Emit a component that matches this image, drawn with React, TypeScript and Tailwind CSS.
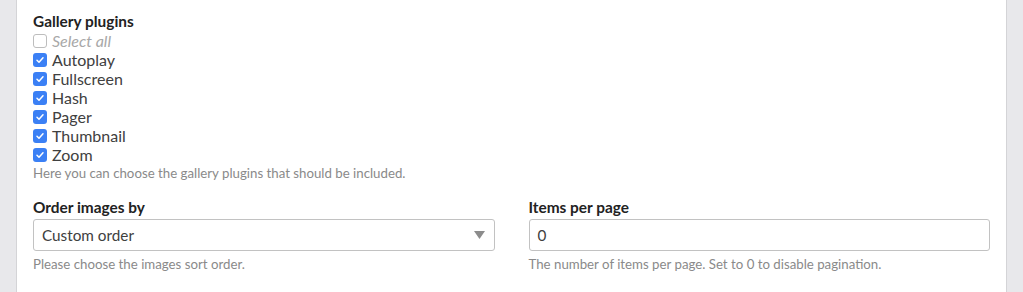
const plugins = ["Autoplay", "Fullscreen", "Hash", "Pager", "Thumbnail", "Zoom"];

const Box = ({ checked }: { checked: boolean }) =>
  checked ? (
    <span className="flex h-[14px] w-[14px] items-center justify-center rounded-[3px] bg-[#3b80f5]">
      <svg width="10" height="10" viewBox="0 0 10 10" fill="none">
        <path d="M2 5.2l2 2 4-4.4" stroke="#fff" strokeWidth="1.5" strokeLinecap="round" strokeLinejoin="round" />
      </svg>
    </span>
  ) : (
    <span className="h-[14px] w-[14px] rounded-[3px] border border-[#bdbdbd] bg-white" />
  );

const Label = ({ children, className = "" }: { children: string; className?: string }) => (
  <div className={`text-[15.4px] font-bold leading-[19px] text-[#222] ${className}`}>{children}</div>
);

const Help = ({ children, className = "" }: { children: string; className?: string }) => (
  <div className={`text-[13.25px] leading-[19px] text-[#8a8a8a] ${className}`}>{children}</div>
);

export default function App() {
  return (
    <div
      className="flex h-[292px] w-[1023px] overflow-hidden bg-[#e8e8eb]"
      style={{ fontFamily: "Lato, 'Open Sans', sans-serif" }}
    >
      <div className="w-4 shrink-0" />
      <div className="w-[991px] shrink-0 border-x border-[#d4d4d7] bg-white px-4 pt-3">
        {/* Plugins */}
        <Label>Gallery plugins</Label>
        <div className="flex flex-col">
          <label className="flex h-[19px] items-center gap-[5px] text-[16px] italic text-[#a8a8a8]">
            <Box checked={false} />
            Select all
          </label>
          {plugins.map((p) => (
            <label key={p} className="flex h-[19px] items-center gap-[5px] text-[16px] text-[#404040]">
              <Box checked />
              {p}
            </label>
          ))}
        </div>
        <Help>Here you can choose the gallery plugins that should be included.</Help>

        {/* Two column fields */}
        <div className="mt-[15px] grid grid-cols-2 gap-x-[34px]">
          <div>
            <Label>Order images by</Label>
            <div className="mt-[2px] flex h-[32px] items-center justify-between rounded-[3px] border border-[#c2c2c2] pl-2 pr-[9px] text-[15.3px] text-[#404040]">
              <span>Custom order</span>
              <svg width="11" height="8" viewBox="0 0 11 8">
                <path d="M0 0h11L5.5 8z" fill="#8c8c8c" />
              </svg>
            </div>
            <Help className="mt-[4px]">Please choose the images sort order.</Help>
          </div>
          <div>
            <Label>Items per page</Label>
            <div className="mt-[2px] flex h-[32px] items-center rounded-[3px] border border-[#c2c2c2] px-2 text-[15.3px] text-[#404040]">
              0
            </div>
            <Help className="mt-[4px]">The number of items per page. Set to 0 to disable pagination.</Help>
          </div>
          <Label className="mt-[15px]">Related list module</Label>
          <Label className="mt-[15px]">Gallery mode</Label>
        </div>
      </div>
    </div>
  );
}
